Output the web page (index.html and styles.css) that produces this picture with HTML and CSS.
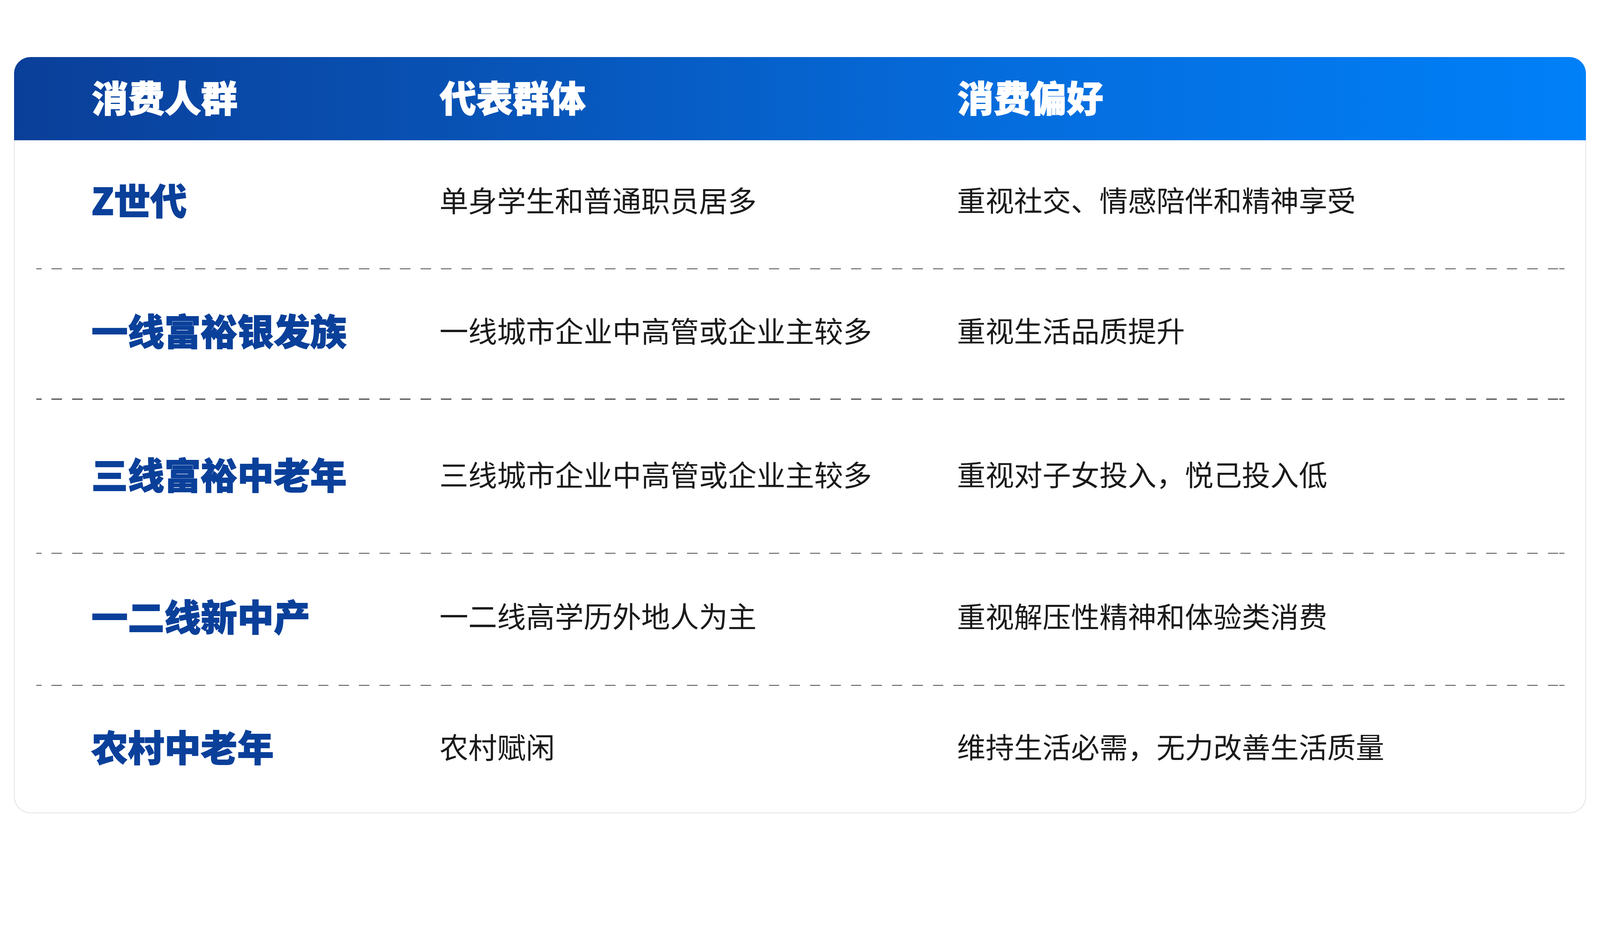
FILE: index.html
```html
<!DOCTYPE html>
<html lang="zh-CN">
<head>
<meta charset="utf-8">
<title>消费人群</title>
<link rel="stylesheet" href="styles.css">
</head>
<body>
<div class="page">
  <div class="card">
    <div class="head grid">
      <div class="hcell">消费人群</div>
      <div class="hcell">代表群体</div>
      <div class="hcell">消费偏好</div>
    </div>
    <div class="body">
      <div class="row grid r1">
        <div class="name">Z世代</div>
        <div class="txt">单身学生和普通职员居多</div>
        <div class="txt pref">重视社交、情感陪伴和精神享受</div>
      </div>
      <div class="sep"></div>
      <div class="row grid r2">
        <div class="name">一线富裕银发族</div>
        <div class="txt">一线城市企业中高管或企业主较多</div>
        <div class="txt pref">重视生活品质提升</div>
      </div>
      <div class="sep"></div>
      <div class="row grid r3">
        <div class="name">三线富裕中老年</div>
        <div class="txt">三线城市企业中高管或企业主较多</div>
        <div class="txt pref">重视对子女投入，悦己投入低</div>
      </div>
      <div class="sep"></div>
      <div class="row grid r4">
        <div class="name">一二线新中产</div>
        <div class="txt">一二线高学历外地人为主</div>
        <div class="txt pref">重视解压性精神和体验类消费</div>
      </div>
      <div class="sep"></div>
      <div class="row grid r5">
        <div class="name">农村中老年</div>
        <div class="txt">农村赋闲</div>
        <div class="txt pref">维持生活必需，无力改善生活质量</div>
      </div>
    </div>
  </div>
</div>
</body>
</html>
```

FILE: styles.css
```css
/* one design unit = one pixel of the 4606px-wide design */
:root {
  --u: calc(100vw / 4606);
}

html, body {
  margin: 0;
  padding: 0;
  background: #ffffff;
}

body {
  font-family: "Noto Sans CJK SC", "Noto Sans", sans-serif;
  overflow: hidden;
}

.page {
  padding: calc(164 * var(--u)) calc(41 * var(--u)) 0 calc(41 * var(--u));
}

.card {
  display: flex;
  flex-direction: column;
}

.grid {
  display: grid;
  grid-template-columns: calc(1002 * var(--u)) calc(1490 * var(--u)) 1fr;
  align-items: center;
  box-sizing: border-box;
}

.head {
  height: calc(240 * var(--u));
  padding: 0 0 calc(14 * var(--u)) calc(223 * var(--u));
  border-radius: calc(47 * var(--u)) calc(47 * var(--u)) 0 0;
  background: linear-gradient(90deg, #0a3f99 0%, #0853b6 30%, #056cdc 62%, #0080f8 100%);
}

.hcell {
  font-size: calc(105 * var(--u));
  line-height: 1;
  font-weight: 900;
  color: #ffffff;
  -webkit-text-stroke: calc(2 * var(--u)) #ffffff;
  white-space: nowrap;
}

.body {
  border: calc(2 * var(--u)) solid #cbcbcb;
  border-top: none;
  border-radius: 0 0 calc(48 * var(--u)) calc(48 * var(--u));
  background: #ffffff;
}

.row {
  padding: 0 0 calc(22 * var(--u)) calc(221 * var(--u));
}

.r1 { height: calc(368 * var(--u)); padding-bottom: calc(30 * var(--u)); }
.r2 { height: calc(372 * var(--u)); padding-bottom: calc(24 * var(--u)); }
.r3 { height: calc(441 * var(--u)); padding-bottom: calc(16 * var(--u)); }
.r4 { height: calc(377 * var(--u)); padding-bottom: calc(24 * var(--u)); }
.r5 { height: calc(365 * var(--u)); padding-bottom: calc(20 * var(--u)); }

.name {
  font-size: calc(105 * var(--u));
  line-height: 1;
  font-weight: 900;
  color: #0a409a;
  -webkit-text-stroke: calc(2 * var(--u)) #0a409a;
  white-space: nowrap;
}

.txt {
  font-size: calc(83 * var(--u));
  line-height: 1;
  font-weight: 400;
  color: #1a1a1a;
  white-space: nowrap;
}

.txt.pref {
  font-size: calc(82 * var(--u));
}

.sep {
  height: calc(3 * var(--u));
  margin: 0 calc(60 * var(--u)) 0 calc(62 * var(--u));
  background-image: repeating-linear-gradient(90deg, #4a4a4a 0 calc(30 * var(--u)), transparent calc(30 * var(--u)) calc(59 * var(--u)));
  background-position: calc(-15 * var(--u)) 0;
}
```
